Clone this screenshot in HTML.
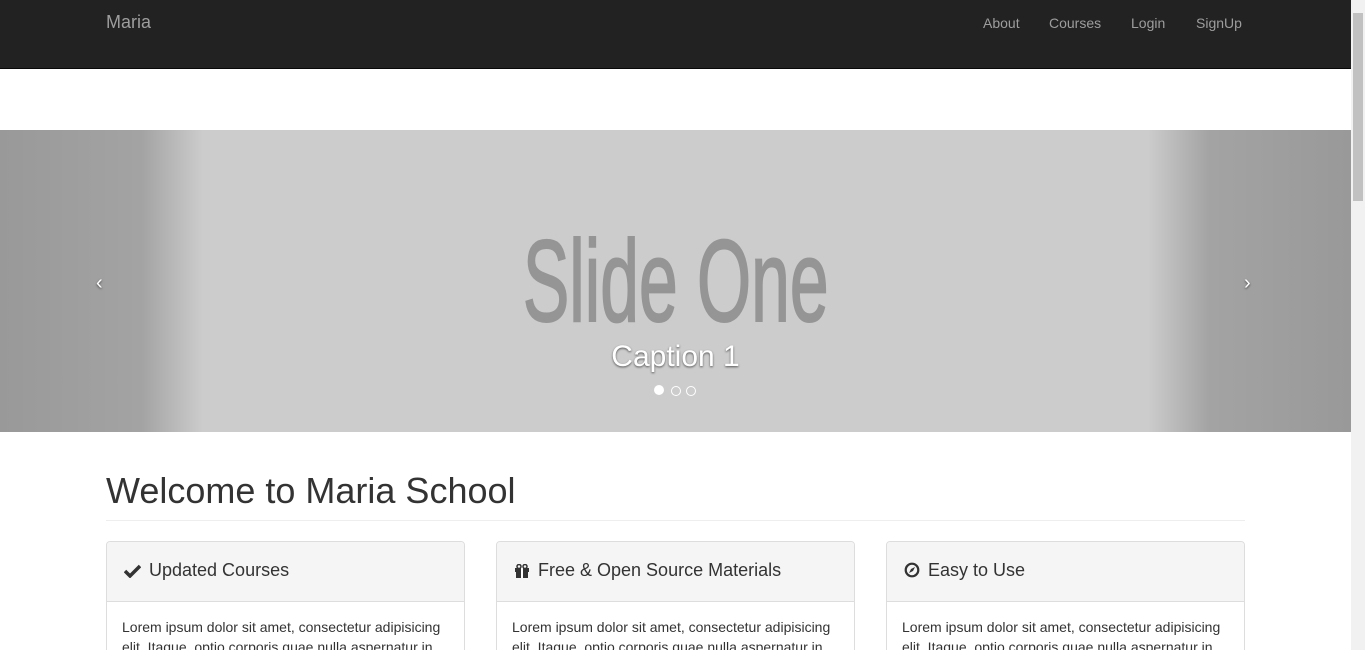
<!DOCTYPE html>
<html style="height:650px;overflow:hidden"><head><style>
body{margin:0;width:1365px;height:650px;overflow:hidden;font-family:"Liberation Sans",sans-serif;background:#fff;position:relative;color:#333}
.nav{position:absolute;left:0;top:0;width:1351px;height:68px;background:#222;border-bottom:1px solid #080808}
.brand{position:absolute;left:106px;top:12px;font-size:18px;color:#9d9d9d}
.nav a{position:absolute;top:15px;font-size:14px;color:#9d9d9d}
.sb{position:absolute;right:0;top:0;width:14px;height:650px;background:#f1f1f1}
.sb div{position:absolute;left:2px;top:13px;width:10px;height:188px;background:#c1c1c1}
.car{position:absolute;left:0;top:130px;width:1351px;height:302px;background:#ccc;overflow:hidden}
.gl{position:absolute;left:0;top:0;width:203px;height:100%;background:linear-gradient(to right,rgba(0,0,0,.25),rgba(0,0,0,.2) 70%,rgba(0,0,0,0))}
.gr{position:absolute;right:0;top:0;width:203px;height:100%;background:linear-gradient(to left,rgba(0,0,0,.25),rgba(0,0,0,.2) 70%,rgba(0,0,0,0))}
.slide{position:absolute;left:0;width:1351px;top:86px;text-align:center;font-size:116px;line-height:130px;color:#959595;-webkit-text-stroke:2px #959595}
.slide span{display:inline-block;transform:scaleX(.6)}
.cap{position:absolute;left:0;width:1351px;top:210px;text-align:center;font-size:30px;color:#fff;text-shadow:0 1px 2px rgba(0,0,0,.6)}
.arr{position:absolute;top:142px;color:#fff;font-size:20px;text-shadow:0 1px 2px rgba(0,0,0,.6)}
.dot{position:absolute;top:256px;width:8px;height:8px;border:1px solid #fff;border-radius:50%}
h1{position:absolute;left:106px;top:470px;margin:0;font-size:36px;font-weight:400;line-height:42px}
.hr{position:absolute;left:106px;top:520px;width:1139px;border-top:1px solid #eee}
.p{position:absolute;top:541px;width:357px;height:120px;border:1px solid #ddd;border-radius:4px;overflow:hidden}
.ph{height:59px;background:#f5f5f5;border-bottom:1px solid #ddd;font-size:18px;line-height:57px;padding-left:17px}
.ph svg{vertical-align:-2px;margin-right:8px}
.pb{padding:15px 15px;font-size:14px;line-height:20px}
</style></head><body>
<div class="nav"><span class="brand">Maria</span>
<a style="left:983px">About</a><a style="left:1049px">Courses</a><a style="left:1131px">Login</a><a style="left:1196px">SignUp</a></div>
<div class="car"><div class="gl"></div><div class="gr"></div>
<div class="slide"><span>Slide One</span></div>
<div class="cap">Caption 1</div>
<div class="arr" style="left:96px">‹</div><div class="arr" style="left:1244px">›</div>
<div class="dot" style="left:654px;top:255px;width:10px;height:10px;background:#fff;border:0"></div>
<div class="dot" style="left:671px"></div><div class="dot" style="left:686px"></div>
</div>
<h1>Welcome to Maria School</h1><div class="hr"></div>
<div class="p" style="left:106px"><div class="ph"><svg width="17" height="14" viewBox="0 0 17 14"><path d="M1 7l5 5L16 2" stroke="#333" stroke-width="3.5" fill="none"/></svg>Updated Courses</div><div class="pb">Lorem ipsum dolor sit amet, consectetur adipisicing elit. Itaque, optio corporis quae nulla aspernatur in</div></div>
<div class="p" style="left:496px"><div class="ph"><svg width="16" height="14" viewBox="0 0 16 14"><rect x="1" y="4" width="14" height="4" fill="#333"/><rect x="2" y="8" width="12" height="6" fill="#333"/><rect x="7" y="4" width="2" height="10" fill="#fff"/><circle cx="5" cy="2.5" r="2" fill="none" stroke="#333" stroke-width="1.5"/><circle cx="11" cy="2.5" r="2" fill="none" stroke="#333" stroke-width="1.5"/></svg>Free &amp; Open Source Materials</div><div class="pb">Lorem ipsum dolor sit amet, consectetur adipisicing elit. Itaque, optio corporis quae nulla aspernatur in</div></div>
<div class="p" style="left:886px"><div class="ph"><svg width="16" height="16" viewBox="0 0 16 16"><circle cx="8" cy="8" r="6.3" fill="none" stroke="#333" stroke-width="2.2"/><path d="M11 5L9 9 5 11 7 7z" fill="#333"/></svg>Easy to Use</div><div class="pb">Lorem ipsum dolor sit amet, consectetur adipisicing elit. Itaque, optio corporis quae nulla aspernatur in</div></div>
<div class="sb"><div></div></div>
</body></html>
